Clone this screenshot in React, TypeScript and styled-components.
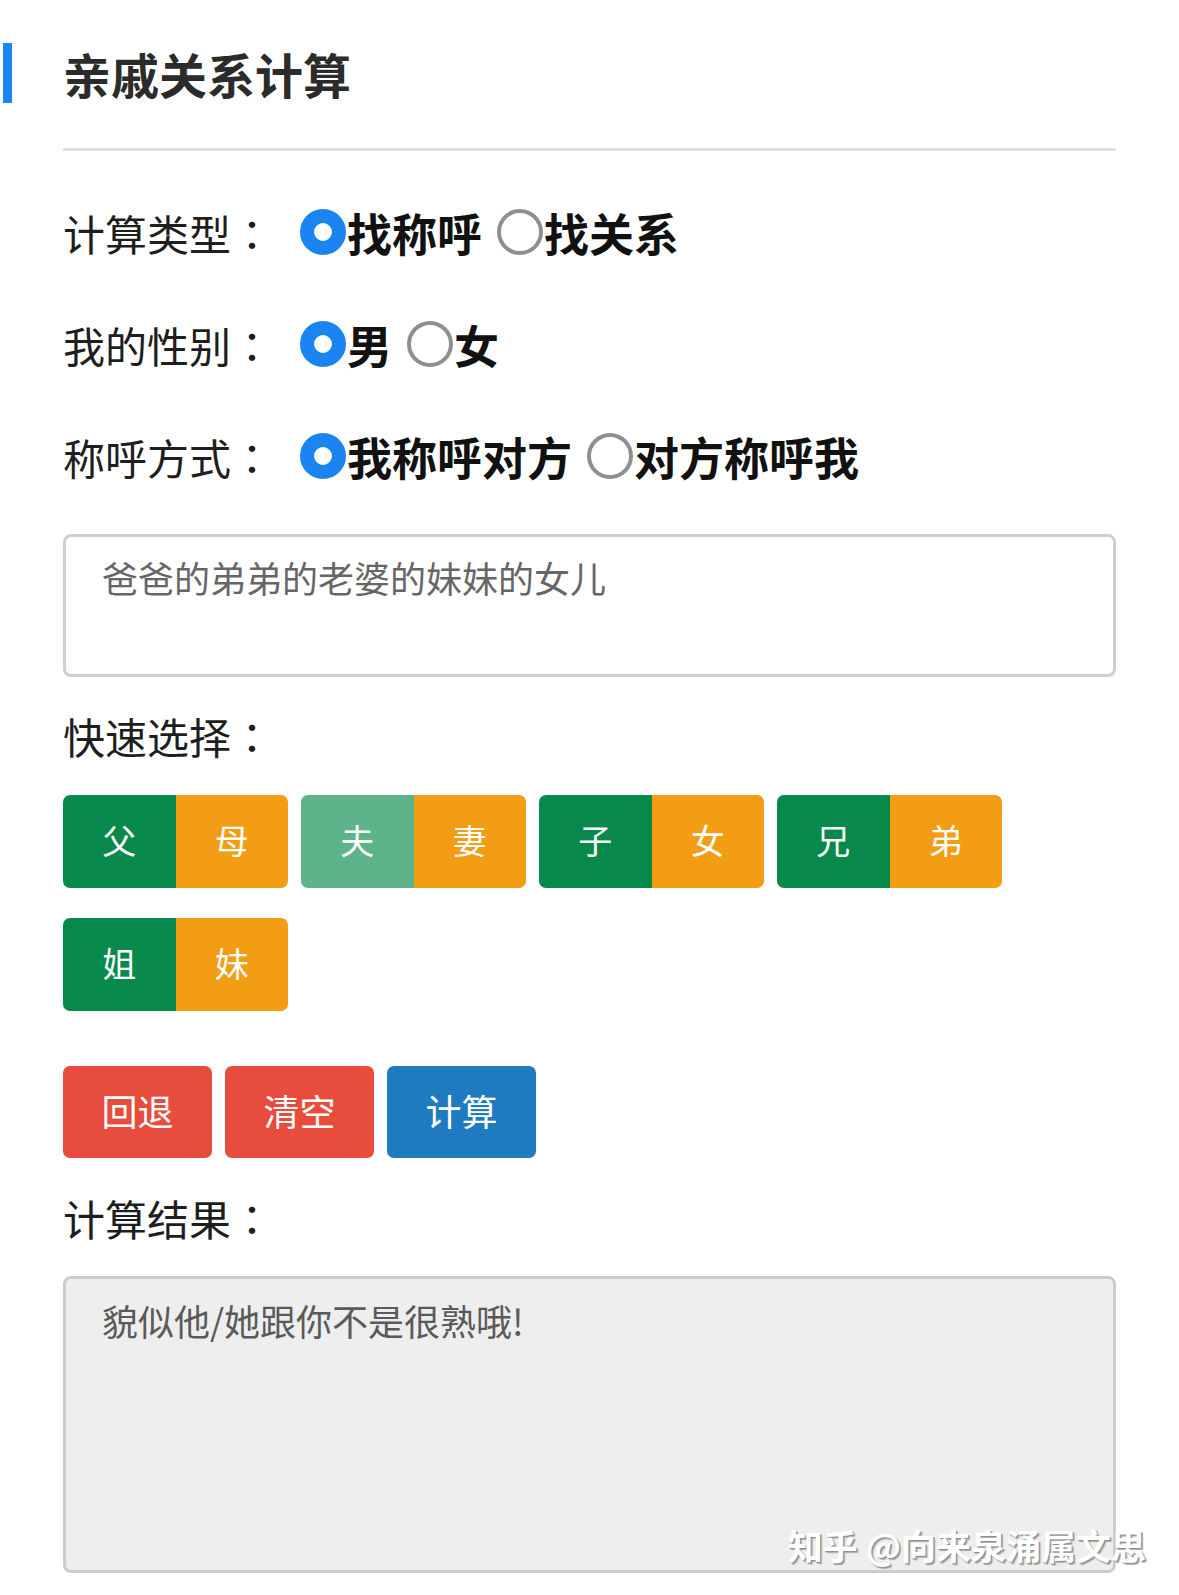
import React from "react";
import styled, { createGlobalStyle } from "styled-components";

const GlobalStyle = createGlobalStyle`
  html, body { margin: 0; padding: 0; background: #fff; }
  body {
    font-family: "Noto Sans CJK SC", "Noto Sans", sans-serif;
    color: #222;
  }
  * { box-sizing: border-box; }
`;

const Page = styled.div`
  position: relative;
  width: 1179px;
  min-height: 1595px;
  padding: 43px 63px 0 0;
`;

const Header = styled.h1`
  margin: 0 0 0 3px;
  height: 60px;
  border-left: 9px solid #1a84f0;
  padding-left: 51px;
  display: flex;
  align-items: center;
  font-size: 48px;
  font-weight: 700;
  color: #2b2b2b;
`;

const Body = styled.div`
  padding-left: 63px;
`;

const Divider = styled.hr`
  margin: 45px 0 0;
  border: none;
  height: 3px;
  background: #e0e0e0;
`;

const Row = styled.div<{ $mt: number }>`
  display: flex;
  align-items: center;
  height: 60px;
  margin-top: ${(p) => p.$mt}px;
`;

const Label = styled.span`
  font-size: 42px;
  color: #1e1e1e;
  width: 237px;
  flex: none;
`;

const Colon = styled.span`
  font-family: "Noto Sans CJK TC", "Noto Sans CJK SC", sans-serif;
`;

const Option = styled.label`
  display: inline-flex;
  align-items: center;
  margin-left: 15px;
  &:first-of-type { margin-left: 0; }
`;

const Radio = styled.span<{ $on?: boolean }>`
  width: 46px;
  height: 46px;
  border-radius: 50%;
  flex: none;
  margin-right: 1px;
  background: #fff;
  border: ${(p) => (p.$on ? "14px solid #1a84f0" : "4px solid #8f8f8f")};
`;

const OptionText = styled.span`
  font-size: 45px;
  font-weight: 700;
  color: #111;
`;

const InputBox = styled.div`
  margin-top: 48px;
  height: 143px;
  border: 3px solid #cfcfcf;
  border-radius: 8px;
  padding: 13px 36px;
  font-size: 36px;
  line-height: 54px;
  color: #666;
`;

const SectionLabel = styled.div<{ $mt: number }>`
  margin-top: ${(p) => p.$mt}px;
  height: 60px;
  display: flex;
  align-items: center;
  font-size: 42px;
  color: #1e1e1e;
`;

const QuickGrid = styled.div`
  margin-top: 30px;
  display: flex;
  flex-wrap: wrap;
  gap: 30px 13px;
  width: 960px;
`;

const Pair = styled.div`
  display: flex;
  width: 225px;
  height: 93px;
  border-radius: 7px;
  overflow: hidden;
`;

const Half = styled.button<{ $kind: "male" | "female" | "active" }>`
  flex: 1;
  border: none;
  margin: 0;
  padding: 0 0 5px;
  font-family: inherit;
  font-size: 34px;
  color: #fff;
  cursor: pointer;
  background: ${(p) =>
    p.$kind === "male" ? "#06894a" : p.$kind === "active" ? "#5db38a" : "#f29d13"};
`;

const Actions = styled.div`
  margin-top: 55px;
  display: flex;
  gap: 13px;
`;

const ActionButton = styled.button<{ $tone: "red" | "blue" }>`
  width: 149px;
  height: 92px;
  border: none;
  border-radius: 7px;
  padding: 0 0 4px;
  font-family: inherit;
  font-size: 36px;
  color: #fff;
  background: ${(p) => (p.$tone === "red" ? "#e74c3c" : "#1f7bc0")};
`;

const ResultBox = styled.div`
  margin-top: 29px;
  height: 297px;
  border: 3px solid #cccccc;
  border-radius: 8px;
  background: #eeeeee;
  padding: 14px 36px;
  font-size: 36px;
  line-height: 54px;
  color: #5a5a5a;
`;

const Watermark = styled.div`
  position: absolute;
  right: 33px;
  bottom: 25px;
  font-size: 35px;
  font-weight: 700;
  color: #fff;
  text-shadow: 1px 1px 0 #8f8f8f, 2px 2px 1px #aaaaaa;
  white-space: nowrap;
`;

const quick: [string, string, boolean][] = [
  ["父", "母", false],
  ["夫", "妻", true],
  ["子", "女", false],
  ["兄", "弟", false],
  ["姐", "妹", false],
];

export default function App() {
  return (
    <Page>
      <GlobalStyle />
      <Header>亲戚关系计算</Header>
      <Body>
        <Divider />
        <Row $mt={51}>
          <Label>计算类型<Colon>：</Colon></Label>
          <Option><Radio $on /><OptionText>找称呼</OptionText></Option>
          <Option><Radio /><OptionText>找关系</OptionText></Option>
        </Row>
        <Row $mt={52}>
          <Label>我的性别<Colon>：</Colon></Label>
          <Option><Radio $on /><OptionText>男</OptionText></Option>
          <Option><Radio /><OptionText>女</OptionText></Option>
        </Row>
        <Row $mt={52}>
          <Label>称呼方式<Colon>：</Colon></Label>
          <Option><Radio $on /><OptionText>我称呼对方</OptionText></Option>
          <Option><Radio /><OptionText>对方称呼我</OptionText></Option>
        </Row>
        <InputBox>爸爸的弟弟的老婆的妹妹的女儿</InputBox>
        <SectionLabel $mt={28}>快速选择<Colon>：</Colon></SectionLabel>
        <QuickGrid>
          {quick.map(([a, b, active]) => (
            <Pair key={a}>
              <Half $kind={active ? "active" : "male"}>{a}</Half>
              <Half $kind="female">{b}</Half>
            </Pair>
          ))}
        </QuickGrid>
        <Actions>
          <ActionButton $tone="red">回退</ActionButton>
          <ActionButton $tone="red">清空</ActionButton>
          <ActionButton $tone="blue">计算</ActionButton>
        </Actions>
        <SectionLabel $mt={29}>计算结果<Colon>：</Colon></SectionLabel>
        <ResultBox>貌似他/她跟你不是很熟哦!</ResultBox>
      </Body>
      <Watermark>知乎 @向来泉涌属文思</Watermark>
    </Page>
  );
}
